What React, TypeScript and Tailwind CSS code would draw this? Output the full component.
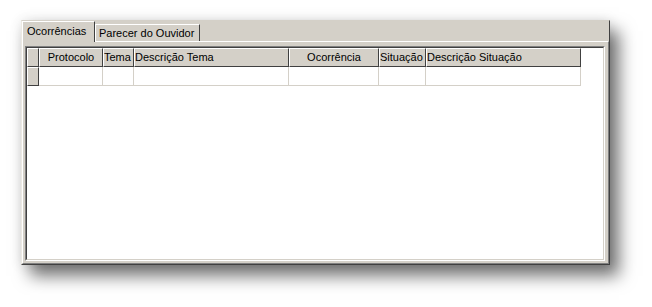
import React from "react";

const cols = [
  { label: "", w: 12, align: "center" },
  { label: "Protocolo", w: 64, align: "center" },
  { label: "Tema", w: 31, align: "left" },
  { label: "Descrição Tema", w: 155, align: "left" },
  { label: "Ocorrência", w: 90, align: "center" },
  { label: "Situação", w: 47, align: "left" },
  { label: "Descrição Situação", w: 155, align: "left" },
];

export default function App() {
  return (
    <div
      className="w-[652px] h-[307px] bg-white pl-[21px] pt-[20px] overflow-hidden"
      style={{ fontFamily: '"Liberation Sans", Arial, sans-serif' }}
    >
      <div className="w-[589px] h-[245px] bg-[#d4d0c8] border-l border-t border-r border-b border-l-[#ece9e2] border-t-[#d4d0c8] border-r-[#404040] border-b-[#404040] flex flex-col shadow-[9px_11px_16px_rgba(0,0,0,0.55),0_0_12px_rgba(0,0,0,0.1)]">
        <div className="h-[20px] flex items-end text-[11px] text-black">
          <div className="relative z-10 h-[21px] mb-[-1px] w-[73px] bg-[#d4d0c8] border-l border-t border-r border-l-white border-t-white border-r-[#404040] pl-[4px] pt-[3px] leading-[13px]">
            Ocorrências
          </div>
          <div className="h-[17px] w-[105px] bg-[#d4d0c8] border-t border-r border-t-white border-r-[#404040] pl-[4px] pt-[2px] leading-[13px] shadow-[inset_1px_0_0_#ffffff]">
            Parecer do Ouvidor
          </div>
        </div>
        <div className="flex-1 flex flex-col border-l border-t border-r border-b border-l-white border-t-white border-r-[#808080] border-b-[#808080] pl-[2px] pt-[4px] pr-[3px] pb-[2px]">
          <div className="flex-1 flex flex-col border border-t-[#808080] border-l-[#808080] border-r-white border-b-white">
            <div className="flex-1 flex flex-col border border-t-[#404040] border-l-[#404040] border-r-[#d4d0c8] border-b-[#d4d0c8] bg-white">
              <div className="flex h-[19px] text-[11px] text-black">
                {cols.map((c, i) => (
                  <div
                    key={i}
                    style={{ width: c.w }}
                    className={`h-[19px] bg-[#d4d0c8] border-l border-t border-r border-b border-l-white border-t-white border-r-[#404040] border-b-[#404040] leading-[16px] whitespace-nowrap overflow-hidden ${
                      c.align === "center" ? "text-center" : "text-left"
                    }`}
                  >
                    {c.label}
                  </div>
                ))}
              </div>
              <div className="flex h-[19px]">
                {cols.map((c, i) =>
                  i === 0 ? (
                    <div
                      key={i}
                      style={{ width: c.w }}
                      className="h-[19px] bg-[#d4d0c8] border-l border-t border-r border-b border-l-white border-t-white border-r-[#404040] border-b-[#404040]"
                    />
                  ) : (
                    <div
                      key={i}
                      style={{ width: c.w }}
                      className="h-[19px] bg-white border-r border-b border-r-[#d4d0c8] border-b-[#d4d0c8]"
                    />
                  )
                )}
              </div>
            </div>
          </div>
        </div>
      </div>
    </div>
  );
}
